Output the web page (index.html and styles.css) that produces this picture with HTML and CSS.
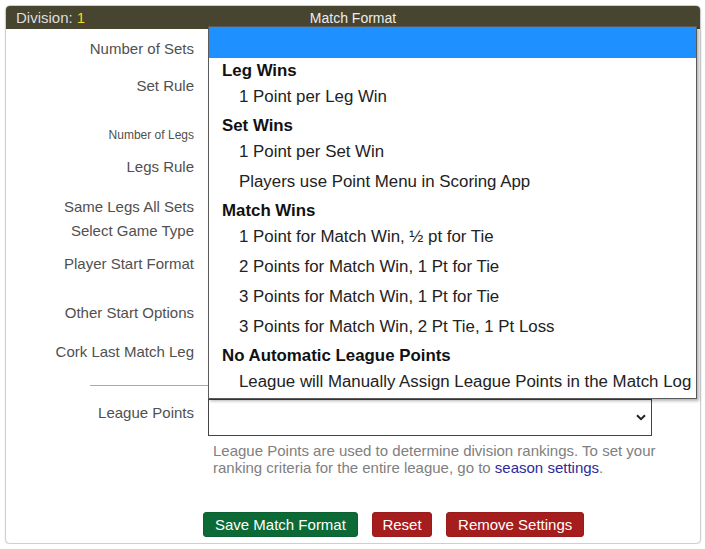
FILE: index.html
```html
<!DOCTYPE html>
<html lang="en">
<head>
<meta charset="utf-8">
<title>Match Format</title>
<link rel="stylesheet" href="styles.css">
</head>
<body>
<div class="card">
  <div class="card-head">
    <span class="division">Division: <span class="div-num">1</span></span>
    <span class="title">Match Format</span>
    <span></span>
  </div>
  <div class="form">
    <div class="row h37"><label class="lbl">Number of Sets</label><div></div></div>
    <div class="row h49"><label class="lbl">Set Rule</label><div></div></div>
    <div class="row h32"><label class="lbl small">Number of Legs</label><div></div></div>
    <div class="row h40"><label class="lbl">Legs Rule</label><div></div></div>
    <div class="row h24"><label class="lbl">Same Legs All Sets</label><div></div></div>
    <div class="row h33"><label class="lbl">Select Game Type</label><div></div></div>
    <div class="row h49"><label class="lbl">Player Start Format</label><div></div></div>
    <div class="row h39"><label class="lbl">Other Start Options</label><div></div></div>
    <div class="row h20"><label class="lbl">Cork Last Match Leg</label><div></div></div>
    <div class="divider"></div>
    <div class="row league">
      <label class="lbl lbl-league">League Points</label>
      <div class="select">
        <svg class="chev" width="10" height="7" viewBox="0 0 10 7"><polyline points="1,1.2 5,5.2 9,1.2" fill="none" stroke="#222" stroke-width="2"/></svg>
      </div>
    </div>
    <div class="row help-row">
      <div></div>
      <p class="help">League Points are used to determine division rankings. To set your ranking criteria for the entire league, go to <a class="link" href="#">season settings</a>.</p>
    </div>
    <div class="actions">
      <button class="btn btn-green">Save Match Format</button>
      <button class="btn btn-red btn-narrow">Reset</button>
      <button class="btn btn-red">Remove Settings</button>
    </div>
  </div>

  <div class="dropdown">
    <div class="opt selected"></div>
    <div class="grp">Leg Wins</div>
    <div class="opt">1 Point per Leg Win</div>
    <div class="grp">Set Wins</div>
    <div class="opt">1 Point per Set Win</div>
    <div class="opt">Players use Point Menu in Scoring App</div>
    <div class="grp">Match Wins</div>
    <div class="opt">1 Point for Match Win, ½ pt for Tie</div>
    <div class="opt">2 Points for Match Win, 1 Pt for Tie</div>
    <div class="opt">3 Points for Match Win, 1 Pt for Tie</div>
    <div class="opt">3 Points for Match Win, 2 Pt Tie, 1 Pt Loss</div>
    <div class="grp">No Automatic League Points</div>
    <div class="opt">League will Manually Assign League Points in the Match Log</div>
  </div>
</div>
</body>
</html>
```

FILE: styles.css
```css
* { box-sizing: border-box; }

html, body {
  margin: 0;
  padding: 0;
  background: #ffffff;
}

body {
  padding: 5px 4px 0 5px;
  font-family: "Liberation Sans", Arial, sans-serif;
}

.card {
  position: relative;
  width: 696px;
  border: 1px solid #cfcfcf;
  border-radius: 5px;
  box-shadow: 0 1px 2px rgba(0, 0, 0, 0.12);
  background: #fff;
}

.card-head {
  height: 23px;
  background: #47442f;
  border-radius: 4px 4px 0 0;
  display: grid;
  grid-template-columns: 1fr auto 1fr;
  align-items: center;
  padding: 0 10px;
}

.division {
  font-size: 15px;
  color: #dedede;
}

.div-num {
  color: #ecdc22;
}

.title {
  font-size: 14px;
  color: #ececec;
}

.form {
  padding: 10px 0 6px 0;
}

.row {
  display: grid;
  grid-template-columns: 188px 444px;
  column-gap: 14px;
}

.help-row {
  grid-template-columns: 188px 470px;
}

.h20 { height: 20px; }
.h24 { height: 24px; }
.h32 { height: 32px; }
.h33 { height: 33px; }
.h37 { height: 37px; }
.h39 { height: 39px; }
.h40 { height: 40px; }
.h49 { height: 49px; }

.lbl {
  display: block;
  text-align: right;
  font-size: 15px;
  line-height: 20px;
  color: #505050;
}

.lbl.small {
  font-size: 12px;
}

.divider {
  margin: 23px 0 0 84px;
  width: 560px;
  height: 1px;
  background: #a8a8a8;
}

.league {
  margin-top: 13px;
}

.lbl-league {
  padding-top: 4px;
}

.select {
  height: 37px;
  border: 1px solid #444;
  display: flex;
  align-items: center;
  justify-content: flex-end;
  padding-right: 5px;
}

.chev {
  display: block;
}

.help {
  margin: 6px 0 0 0;
  padding-left: 5px;
  font-size: 15px;
  line-height: 17.4px;
  color: #808080;
}

.link {
  color: #2b2b9e;
  text-decoration: none;
}

.actions {
  display: flex;
  gap: 14px;
  padding-left: 197px;
  margin-top: 35px;
}

.btn {
  height: 25px;
  padding: 0 11px;
  font-family: "Liberation Sans", Arial, sans-serif;
  font-size: 15px;
  color: #fff;
  border-radius: 3px;
  cursor: pointer;
}

.btn-narrow {
  padding: 0 9.5px;
}

.btn-green {
  background: #0b6a35;
  border: 1px solid #0a6030;
}

.btn-red {
  background: #a61d1d;
  border: 1px solid #981a1a;
}

.dropdown {
  position: absolute;
  left: 202px;
  top: 20px;
  width: 489px;
  border: 1px solid #5a5a5a;
  background: #fff;
  box-shadow: 2px 2px 3px rgba(0, 0, 0, 0.3);
  font-size: 16.85px;
  color: #222;
}

.opt {
  height: 30px;
  line-height: 28px;
  padding: 0 0 2px 30px;
  white-space: nowrap;
}

.opt.selected {
  height: 31px;
  background: #1e90ff;
}

.grp {
  height: 25px;
  line-height: 25px;
  padding-left: 13px;
  font-weight: bold;
  color: #111;
}
```
